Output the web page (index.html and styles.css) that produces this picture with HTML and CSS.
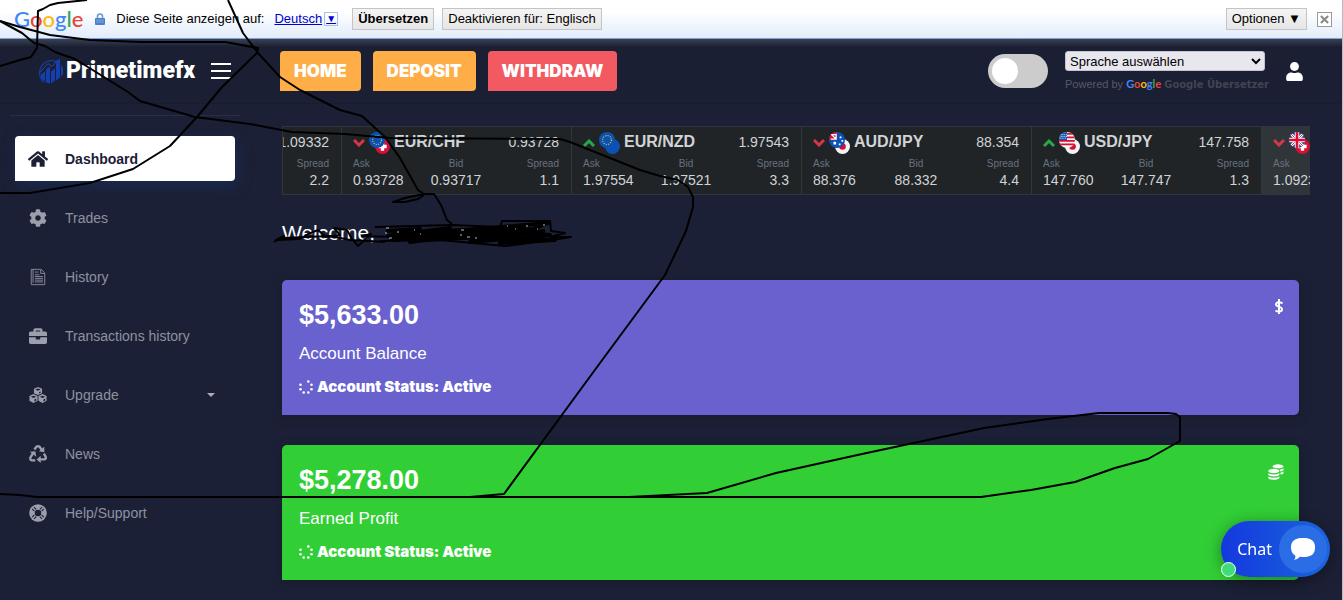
FILE: index.html
```html
<!DOCTYPE html>
<html lang="de">
<head>
<meta charset="utf-8">
<meta name="viewport" content="width=device-width, initial-scale=1">
<title>Primetimefx</title>
<link rel="stylesheet" href="styles.css">
</head>
<body>
<svg class="defs" aria-hidden="true">
  <defs>
    <clipPath id="disc"><circle cx="9" cy="9" r="9"/></clipPath>
    <symbol id="flag-eu" viewBox="0 0 18 18"><circle cx="9" cy="9" r="9" fill="#0b52b4"/><circle cx="9" cy="9" r="5" fill="none" stroke="#e8cf3c" stroke-width="1.2" stroke-dasharray="1.2 1.42"/></symbol>
    <symbol id="flag-ch" viewBox="0 0 18 18"><circle cx="9" cy="9" r="9" fill="#d80f35"/><path d="M7 4h4v3h3v4h-3v3H7v-3H4V7h3z" fill="#fff"/></symbol>
    <symbol id="flag-nz" viewBox="0 0 18 18"><circle cx="9" cy="9" r="9" fill="#0b52b4"/></symbol>
    <symbol id="flag-jp" viewBox="0 0 18 18"><circle cx="9" cy="9" r="9" fill="#f4f4f4"/><circle cx="9" cy="9" r="4" fill="#d80f35"/></symbol>
    <symbol id="flag-au" viewBox="0 0 18 18"><g clip-path="url(#disc)"><path fill="#0b52b4" d="M0 0h18v18H0z"/><path fill="#d80f35" d="M0 0h9v9H0z"/><path stroke="#fff" stroke-width="1.5" fill="none" d="M2 2l6 6M8 2v6H2M4 3h4"/><path fill="#fff" d="M12 5h2v2h-2zM14 9h2v2h-2zM11 13h2v2h-2zM5 11h3v3H5z"/></g></symbol>
    <symbol id="flag-us" viewBox="0 0 18 18"><g clip-path="url(#disc)"><path fill="#f4f4f4" d="M0 0h18v18H0z"/><path fill="#d80f35" d="M9 1h9v2H9zM9 5h9v2H9zM0 9h18v2H0zM0 13h18v2H0z"/><path fill="#0b52b4" d="M0 0h9v9H0z"/><path stroke="#fff" stroke-width="1" stroke-dasharray="1 1" d="M2 3h7M2 5h7M1 7h8"/></g></symbol>
    <symbol id="flag-gb" viewBox="0 0 18 18"><g clip-path="url(#disc)"><path fill="#1b3f9c" d="M0 0h18v18H0z"/><path stroke="#fff" stroke-width="3" d="M0 0l18 18M18 0L0 18"/><path stroke="#d80f35" stroke-width="1" d="M0 0l18 18M18 0L0 18"/><path stroke="#fff" stroke-width="5" d="M9 0v18M0 9h18"/><path stroke="#d80f35" stroke-width="3" d="M9 0v18M0 9h18"/></g></symbol>
    <symbol id="up" viewBox="0 0 12 8"><path d="M1 7l5-5 5 5" fill="none" stroke="#26a84a" stroke-width="3"/></symbol>
    <symbol id="down" viewBox="0 0 12 8"><path d="M1 1l5 5 5-5" fill="none" stroke="#d8344a" stroke-width="3"/></symbol>
    <symbol id="dots" viewBox="0 0 14 14"><g fill="#fff"><circle cx="9.3" cy="1.5" r="1.3"/><circle cx="12.5" cy="4.7" r="1.3"/><circle cx="12.5" cy="9.3" r="1.3"/><circle cx="9.3" cy="12.5" r="1.3"/><circle cx="4.7" cy="12.5" r="1.3"/><circle cx="1.5" cy="9.3" r="1.3"/><circle cx="1.5" cy="4.7" r="1.3"/></g></symbol>
  </defs>
</svg>

<div class="translate-bar">
  <span class="google" aria-label="Google"><span class="g-blue">G</span><span class="g-red">o</span><span class="g-yellow">o</span><span class="g-blue">g</span><span class="g-green">l</span><span class="g-red">e</span></span>
  <svg class="lock" viewBox="0 0 10 12"><path d="M2.5 6V3.5a2.500 2.500 0 0 1 5 0V6" fill="none" stroke="#6d9bd3" stroke-width="1.6"/><rect y="5" width="10" height="7" rx="1" fill="#4a80c4"/><path d="M1 7h8M1 9h8" stroke="#7fa9dc"/></svg>
  <span class="translate-text">Diese Seite anzeigen auf:</span>
  <a class="lang" href="#">Deutsch<span class="lang-arrow">▼</span></a>
  <button class="bar-button strong" type="button">Übersetzen</button>
  <button class="bar-button" type="button">Deaktivieren für: Englisch</button>
  <button class="bar-button options" type="button">Optionen ▼</button>
  <button class="close" type="button" aria-label="Schließen"><svg viewBox="0 0 10 10"><path d="M1 1l8 8M9 1L1 9" stroke="#8a8a8a" stroke-width="2.4"/></svg></button>
</div>

<header class="header">
  <div class="brand">
    <svg class="brand-mark" viewBox="0 0 27 27"><path d="M8 25A12 12 0 1 1 24 6" fill="none" stroke="#173a9c" stroke-width="1.2"/><path fill="#143fae" d="M5 17l4-3v10l-4-3zM10 12l4-3v17l-4-1zM15 14l4-3v12l-4 3zM20 5l4-4v19l-4 3zM25 7l2 4v5l-2 4z"/><path d="M3 16L12 6l4 3 6-7" fill="none" stroke="#1c49bd"/></svg>
    <span class="brand-name">Primetimefx</span>
    <button class="menu-button" type="button" aria-label="Menu"><svg viewBox="0 0 20 18"><path d="M0 2h20M0 9h20M0 16h20" stroke="#fff" stroke-width="2"/></svg></button>
  </div>
  <nav class="actions">
    <a class="action" href="#">HOME</a>
    <a class="action" href="#">DEPOSIT</a>
    <a class="action danger" href="#">WITHDRAW</a>
  </nav>
  <div class="tools">
    <input class="toggle" type="checkbox" aria-label="Theme">
    <div class="translator">
      <select class="language" aria-label="Sprache auswählen"><option>Sprache auswählen</option></select>
      <div class="powered">Powered by <span class="google small"><span class="g-blue">G</span><span class="g-red">o</span><span class="g-yellow">o</span><span class="g-blue">g</span><span class="g-green">l</span><span class="g-red">e</span></span> <b>Google Übersetzer</b></div>
    </div>
    <a class="user" href="#" aria-label="Profile"><svg viewBox="0 0 448 512"><path fill="#fff" d="M224 240c66 0 120-54 120-120S290 0 224 0 104 54 104 120s54 120 120 120zm90 40h-17c-22 10-47 16-73 16s-51-6-73-16h-17C60 280 0 340 0 414v50c0 26 22 48 48 48h352c26 0 48-22 48-48v-50c0-74-60-134-134-134z"/></svg></a>
  </div>
</header>

<div class="page">
  <nav class="sidebar">
    <a class="item active" href="#"><svg viewBox="0 0 576 512"><path d="M280 148L96 300v164a16 16 0 0 0 16 16h112a16 16 0 0 0 16-16v-96a16 16 0 0 1 16-16h64a16 16 0 0 1 16 16v96a16 16 0 0 0 16 16h112a16 16 0 0 0 16-16V300L296 148a12 12 0 0 0-16 0zM571.600 251.500L488 182.600V44a12 12 0 0 0-12-12h-56a12 12 0 0 0-12 12v72.700L318.500 43a48 48 0 0 0-61 0L4.300 251.500a12 12 0 0 0-1.600 16.900l25.500 31A12 12 0 0 0 45 301l235.400-193.700a12 12 0 0 1 15.300 0L531 301a12 12 0 0 0 16.900-1.600l25.500-31a12 12 0 0 0-1.800-16.900z"/></svg>Dashboard</a>
    <a class="item" href="#"><svg viewBox="0 0 512 512"><path d="M487.400 315.700l-42.600-24.600c4.300-23.200 4.300-47 0-70.200l42.600-24.600c4.900-2.800 7.100-8.600 5.500-14-11.100-35.600-30-67.800-54.700-94.600-3.800-4.100-10-5.100-14.800-2.300L380.800 110c-17.900-15.400-38.500-27.300-60.800-35.100V25.800c0-5.600-3.900-10.500-9.400-11.700-36.700-8.200-74.300-7.800-109.200 0-5.500 1.200-9.400 6.100-9.400 11.700V75c-22.200 7.900-42.800 19.800-60.800 35.100L88.700 85.500c-4.900-2.800-11-1.900-14.800 2.300-24.700 26.700-43.600 58.900-54.700 94.600-1.700 5.400.6 11.200 5.500 14L67.300 221c-4.300 23.200-4.300 47 0 70.200l-42.600 24.600c-4.900 2.800-7.100 8.600-5.500 14 11.100 35.600 30 67.800 54.700 94.600 3.800 4.100 10 5.100 14.800 2.300l42.600-24.600c17.900 15.400 38.500 27.300 60.800 35.100v49.200c0 5.600 3.900 10.500 9.400 11.700 36.700 8.200 74.300 7.800 109.200 0 5.500-1.200 9.400-6.100 9.400-11.700v-49.200c22.200-7.900 42.800-19.800 60.800-35.100l42.600 24.600c4.900 2.800 11 1.900 14.800-2.300 24.700-26.700 43.600-58.900 54.700-94.600 1.500-5.500-.7-11.300-5.600-14.100zM256 336c-44.100 0-80-35.900-80-80s35.900-80 80-80 80 35.900 80 80-35.900 80-80 80z"/></svg>Trades</a>
    <a class="item" href="#"><svg viewBox="0 0 20 20"><g fill="none" stroke="#8d92a0"><path d="M4.500 16.500V1.500h9l4 4v13H4.500"/><path d="M4.500 1.500h-2v17h2M13 2v4h4M6.500 4.500h4M6.500 7.500h5M6.500 9.500h9M6.500 11.500h9M6.500 13.500h9M6.500 15.500h9"/></g></svg>History</a>
    <a class="item" href="#"><svg viewBox="0 0 512 512"><path d="M320 336c0 9-7 16-16 16h-96c-9 0-16-7-16-16v-48H0v144c0 26 22 48 48 48h416c26 0 48-22 48-48V288H320v48zm144-208h-80V80c0-26-22-48-48-48H176c-26 0-48 22-48 48v48H48c-26 0-48 22-48 48v80h512v-80c0-26-22-48-48-48zm-144 0H192V96h128v32z"/></svg>Transactions history</a>
    <a class="item" href="#"><svg viewBox="0 0 20 20"><path d="M10 1l4.500 2v5L10 10 5.500 8V3zM5 9l4.500 2v5.500L5 19l-4.500-2.500V11zM15 9l4.500 2v5.500L15 19l-4.500-2.500V11z"/><path d="M7 4l3 1.300L13 4l-3-1.200zM2 12l3 1.300L8 12l-3-1.200zM12 12l3 1.300 3-1.300-3-1.200zM11 7l2-1v1.400l-2 1zM6 15l2-1v2l-2 1.200zM16 15l2-1v2l-2 1.200z" fill="#1c2036"/></svg>Upgrade<span class="caret"></span></a>
    <a class="item" href="#"><svg viewBox="0 0 20 20"><g fill="none" stroke="#9a9fab" stroke-width="2.600" stroke-linejoin="round"><path d="M6 5l2-2.800q2-1.700 4 0l2 3M4.500 9l-3 5q-.5 3 2 3H7M12 16h4.500q3-.5 2-3l-2-3.500"/></g><path d="M11 7l6 1V2zM1 7.500l6-.500 1 6zM13 12v8l-4.500-4z"/></svg>News</a>
    <a class="item" href="#"><svg viewBox="0 0 20 20"><circle cx="10" cy="10" r="9.800"/><circle cx="10" cy="10" r="3.600" fill="#1c2036"/><path d="M5.500 3.500L8 6M3.500 5.500L6 8M14.500 3.500L12 6M16.500 5.500L14 8M5.500 16.500L8 14M3.500 14.500L6 12M14.500 16.500L12 14M16.500 14.500L14 12" stroke="#1c2036" stroke-width="1.200"/></svg>Help/Support</a>
  </nav>

  <main class="content">
    <div class="ticker">
      <section class="quote partial"><div class="quote-head"><span>1.09332</span></div><dl><div><dt>Spread</dt><dd>2.2</dd></div></dl></section>
      <section class="quote"><div class="quote-head"><svg class="trend"><use href="#down"/></svg><svg class="flags" viewBox="0 0 21 22"><use href="#flag-ch" x="6" y="7" width="15" height="15"/><use href="#flag-eu" width="16" height="16"/></svg><strong>EUR/CHF</strong><span>0.93728</span></div><dl><div><dt>Ask</dt><dd>0.93728</dd></div><div><dt>Bid</dt><dd>0.93717</dd></div><div><dt>Spread</dt><dd>1.1</dd></div></dl></section>
      <section class="quote"><div class="quote-head"><svg class="trend"><use href="#up"/></svg><svg class="flags" viewBox="0 0 21 22"><use href="#flag-nz" x="6" y="7" width="15" height="15"/><use href="#flag-eu" width="16" height="16"/></svg><strong>EUR/NZD</strong><span>1.97543</span></div><dl><div><dt>Ask</dt><dd>1.97554</dd></div><div><dt>Bid</dt><dd>1.97521</dd></div><div><dt>Spread</dt><dd>3.3</dd></div></dl></section>
      <section class="quote"><div class="quote-head"><svg class="trend"><use href="#down"/></svg><svg class="flags" viewBox="0 0 21 22"><use href="#flag-jp" x="6" y="7" width="15" height="15"/><use href="#flag-au" width="16" height="16"/></svg><strong>AUD/JPY</strong><span>88.354</span></div><dl><div><dt>Ask</dt><dd>88.376</dd></div><div><dt>Bid</dt><dd>88.332</dd></div><div><dt>Spread</dt><dd>4.4</dd></div></dl></section>
      <section class="quote"><div class="quote-head"><svg class="trend"><use href="#up"/></svg><svg class="flags" viewBox="0 0 21 22"><use href="#flag-jp" x="6" y="7" width="15" height="15"/><use href="#flag-us" width="16" height="16"/></svg><strong>USD/JPY</strong><span>147.758</span></div><dl><div><dt>Ask</dt><dd>147.760</dd></div><div><dt>Bid</dt><dd>147.747</dd></div><div><dt>Spread</dt><dd>1.3</dd></div></dl></section>
      <section class="quote hot"><div class="quote-head"><svg class="trend"><use href="#down"/></svg><svg class="flags" viewBox="0 0 21 22"><use href="#flag-ch" x="6" y="7" width="15" height="15"/><use href="#flag-gb" width="16" height="16"/></svg></div><dl><div><dt>Ask</dt><dd>1.0923</dd></div></dl></section>
    </div>

    <h1 class="welcome">Welcome,</h1>

    <div class="cards">
      <section class="card balance">
        <div class="card-body"><h2>$5,633.00</h2><p>Account Balance</p><p class="status"><svg><use href="#dots"/></svg>Account Status: Active</p></div>
        <svg class="card-icon" viewBox="0 0 16 16"><path d="M14.500 4.500Q13 3 11 3.200 8 3.400 8 5.400C8 8 14 7.300 14 10.300Q14 12.500 11 12.700 9 12.700 7.500 11.500M11 0v15" fill="none" stroke="#fff" stroke-width="2"/></svg>
      </section>
      <section class="card profit">
        <div class="card-body"><h2>$5,278.00</h2><p>Earned Profit</p><p class="status"><svg><use href="#dots"/></svg>Account Status: Active</p></div>
        <svg class="card-icon" viewBox="0 0 16 16"><g fill="#fff"><ellipse cx="10" cy="2.300" rx="5.500" ry="2"/><path d="M11.500 5.500q3 0 4-1.500v2q-1 1.300-3 1.500-.500-1-1-2zM12.500 8.500q2 0 3-1.300v2q-1 1.300-3 1.300z"/><ellipse cx="5.800" cy="7" rx="5.600" ry="2.200"/><path d="M.2 9.200q5.600 2.500 11.200 0v1.500q-1 1.700-5.600 1.700T.2 10.700zM.2 12.500q5.600 2.500 11.200 0V14q-1 1.800-5.600 1.800T.2 14z"/></g></svg>
      </section>
    </div>
  </main>
</div>

<button class="chat" type="button"><span>Chat</span><span class="bubble"><svg viewBox="0 0 24 22"><path fill="#fff" d="M12 0C20 0 24 2.500 24 9.500S20 19 12 19l-3-.2Q6.500 21.500 3 22q2-2 1.300-4.600Q0 15.500 0 9.500C0 2.500 4 0 12 0z"/></svg></span><span class="online"></span></button>

<svg class="ink" width="1343" height="600" viewBox="0 0 1343 600" aria-hidden="true">
  <path d="M0 66L20 60 31 57 37 48 38 11 43 9 50 5 58 3 87 0"/>
  <path d="M0 21L20 27 50 35 90 40 140 42 225 42 258 48 257 53 222 87 197 117 170 146 133 169 90 183 30 193 0 193"/>
  <path d="M0 21L22 33 34 43 45 46 55 52 75 59 128 92 140 101 195 117 250 124 292 132 345 134 390 138 560 139 570 142 640 170 660 176 678 180 688 187 693 197 693 207 686 231 665 275 600 363 504 494 470 497"/>
  <path d="M0 494L20 495 37 497H981L1031 490 1075 482 1115 468 1148 459 1180 441V417L1176 414 1168 413H1099L1048 419 984 428 862 454 776 473 707 493 629 497"/>
  <path d="M228 0L243 33 258 53 280 77 300 90 340 110 362 116 385 137 400 158 418 190 424 194 434 194 441 205 447 220 452 224M424 194L405 198 393 202 405 202 418 199 424 195"/>
  <path d="M274 242L284 236 276 240 300 239 308 234 318 230 326 237 340 235 334 228 347 230 352 239 358 246 371 234 362 236 395 237M282 238L330 236 350 240 385 242"/>
  <path class="scrub" d="M386 231L420 229 388 236 450 228 392 240 455 235 410 242 495 231 400 234 510 227 425 240 520 235 450 231 535 229 470 242 550 235 480 229 548 223 500 243 555 240 475 238 545 231"/>
  <path d="M375 227L452 225 500 227 502 221 550 221 551 231 565 233 550 237 571 237 545 241 505 246 440 240 380 241"/>
  <path class="specks" d="M386 228h3M385 233h2M389 238h3M397 232h2M414 230h1M420 234h1M461 230h3M460 235h2M467 237h3M475 238h2M507 226h1M515 229h1M526 226h2M537 229h1M543 225h2"/>
</svg>
</body>
</html>
```

FILE: styles.css
```css
* { box-sizing: border-box; }
body {
  margin: 0;
  min-height: 100vh;
  border-right: 1px solid #b9bbc4;
  background: #1c2036;
  color: #fff;
  font: 14px/20px "Liberation Sans", Arial, sans-serif;
  overflow: hidden;
}
a { color: inherit; text-decoration: none; }
h1, h2, p, dl, dd { margin: 0; }
button { font: inherit; cursor: pointer; }
.defs { position: absolute; width: 0; height: 0; }

.translate-bar {
  display: flex;
  align-items: center;
  height: 39px;
  padding: 0 10px 0 14px;
  background: linear-gradient(#fff 30%, #e2ecfb);
  border-bottom: 1px solid #7da3dc;
  color: #000;
  font-size: 13px;
}
.google { font: 500 22px/28px Lato, sans-serif; }
.g-blue { color: #4285f4; }
.g-red { color: #ea4335; }
.g-yellow { color: #fbbc05; }
.g-green { color: #34a853; }
.lock { width: 10px; height: 12px; margin: 0 11px 0 12px; }
.lang { display: flex; align-items: center; gap: 2px; margin: 0 14px 0 10px; color: #0000cc; text-decoration: underline; }
.lang-arrow {
  display: inline-block;
  width: 14px;
  border: 1px solid #a9bfe4;
  font-size: 10px;
  line-height: 12px;
  text-align: center;
}
.bar-button {
  height: 22px;
  margin-right: 8px;
  padding: 0 5px;
  border: 1px solid #c4c4c4;
  background: linear-gradient(#f4f4f4, #e6e6e6);
  color: #000;
  line-height: 18px;
}
.strong { font-weight: bold; }
.options { margin: 0 10px 0 auto; }
.close { display: grid; place-items: center; width: 15px; height: 15px; padding: 0; border: 1px solid #999; background: #fff; }
.close svg { width: 9px; height: 9px; }

.header {
  display: flex;
  align-items: center;
  height: 65px;
  padding-right: 39px;
  border-bottom: 1px solid #191c2e;
  background: linear-gradient(#3a4150, #1b1f33 8px);
}
.brand { display: flex; align-items: center; flex: 0 0 280px; padding-left: 36px; }
.brand-mark { flex: none; width: 27px; height: 28px; }
.brand-name { width: 135px; padding-left: 3px; font: 900 23px/28px Roboto, sans-serif; }
.menu-button { margin-left: 13px; padding: 0; border: 0; background: none; }
.menu-button svg { display: block; width: 20px; height: 18px; }
.actions { display: flex; gap: 12px; }
.action {
  padding: 0 14px;
  border-radius: 4px 4px 4px 0;
  background: #ffad46;
  font: 900 17px/40px Inter, sans-serif;
}
.danger { background: #f25961; }
.tools { display: flex; align-items: center; margin-left: auto; }
.toggle {
  appearance: none;
  width: 60px;
  height: 34px;
  margin: 0 17px 0 0;
  padding: 4px;
  border-radius: 17px;
  background: #ccc;
}
.toggle::before { content: ""; display: block; width: 26px; height: 26px; border-radius: 50%; background: #fff; }
.translator { width: 205px; padding-top: 3px; white-space: nowrap; }
.language {
  display: block;
  width: 200px;
  height: 20px;
  border: 1px solid #c5c3cb;
  border-radius: 3px;
  background: #e9e7ee;
  color: #000;
  font: 13px/18px "Liberation Sans", Arial, sans-serif;
}
.powered { margin-top: 3px; color: #555966; font-size: 11px; }
.powered b { color: #414452; font: 700 10px/16px "DejaVu Sans", sans-serif; }
.small { font: 700 11px/16px Lato, sans-serif; }
.user { margin-left: 16px; }
.user svg { display: block; width: 17px; height: 19px; }

.page { display: grid; grid-template-columns: 253px minmax(0, 1fr); }
.sidebar {
  display: flex;
  flex-direction: column;
  gap: 14px;
  margin: 11px 13px 0 10px;
  padding: 20px 5px 0;
  border-top: 1px solid #292e45;
}
.item {
  display: flex;
  align-items: center;
  height: 45px;
  padding: 0 20px 0 13px;
  border-radius: 4px 4px 4px 0;
  color: #8d92a0;
}
.item svg { width: 20px; height: 18px; margin-right: 17px; fill: #9a9fab; }
.active { background: #fff; color: #1c2036; font-weight: bold; box-shadow: 2px 4px 14px #192b52; }
.item.active svg { fill: #1c2036; }
.caret { margin-left: auto; border: 4px solid transparent; border-top-color: #a9adb8; border-bottom: 0; }

.content { padding: 22px 43px 20px 29px; }
.ticker {
  display: flex;
  margin-right: -11px;
  overflow: hidden;
  border: 1px solid #30363a;
  border-right: 0;
  background: #202427;
}
.quote {
  flex: 0 0 230px;
  min-width: 0;
  height: 67px;
  padding: 5px 12px 0 11px;
  border-right: 1px solid #32373b;
  color: #d1d3d6;
}
.quote.partial { flex-basis: 59px; padding-left: 0; }
.hot { background: #303539; }
.quote-head { display: flex; align-items: flex-start; height: 26px; }
.quote-head strong { padding-left: 4px; font-size: 16px; }
.quote-head span { margin-left: auto; }
.partial .quote-head { justify-content: flex-end; }
.partial .quote-head span { margin: 0; }
.trend { width: 12px; height: 8px; margin: 7px 4px 0 0; }
.flags { width: 21px; height: 22px; }
.quote dl { display: grid; grid-template-columns: 1fr 1fr 1fr; }
.quote.partial dl { grid-template-columns: 1fr; text-align: right; }
.quote dl div:nth-child(2) { text-align: center; }
.quote dl div:nth-child(3) { text-align: right; }
.quote dt { color: #68727f; font-size: 10px; line-height: 12px; }
.quote dd { line-height: 20px; }

.welcome { margin: 24px 0 34px; font-size: 21px; font-weight: normal; line-height: 27px; }
.cards { display: grid; gap: 30px; }
.card {
  display: flex;
  justify-content: space-between;
  height: 135px;
  padding: 19px 15px 0 17px;
  border-radius: 5px 5px 5px 0;
  box-shadow: 0 2px 10px #171b28;
}
.balance { background: #6861ce; }
.profit { background: #31ce36; }
.card h2 { font-size: 27px; line-height: 32px; }
.card p { margin-top: 12px; font-size: 17px; line-height: 22px; }
.card .status { display: flex; align-items: center; gap: 4px; margin-top: 11px; font: 900 15px/22px Inter, sans-serif; }
.status svg { width: 14px; height: 14px; }
.card-icon { width: 16px; height: 16px; }

.chat {
  position: fixed;
  right: 13px;
  bottom: 23px;
  display: flex;
  align-items: center;
  gap: 7px;
  height: 56px;
  padding: 0 3px 0 16px;
  border: 0;
  border-radius: 28px;
  background: linear-gradient(90deg, #1438df, #1a65dc);
  box-shadow: 0 3px 16px #0006;
  color: #fff;
  font: 16px/24px "Noto Sans", sans-serif;
}
.bubble { display: grid; place-items: center; width: 48px; height: 48px; border-radius: 50%; background: #2b6de4; }
.bubble svg { width: 24px; height: 22px; }
.online { position: absolute; left: 0; bottom: 0; width: 15px; height: 15px; border: 1px solid #fff; border-radius: 50%; background: #41dc79; }

.ink { position: absolute; left: 0; top: 0; pointer-events: none; fill: none; stroke: #000; stroke-width: 2; stroke-linejoin: round; }
.ink .scrub { stroke-width: 4; }
.ink .specks { stroke: #bbb; stroke-width: 1; }
```
